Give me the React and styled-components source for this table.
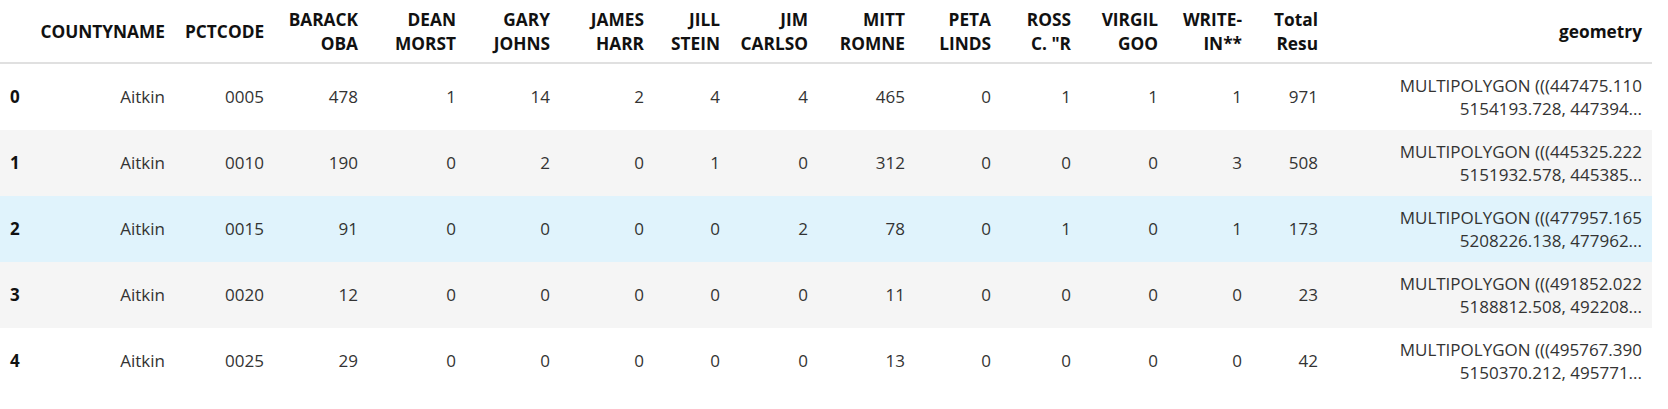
import React from "react";
import styled, { createGlobalStyle } from "styled-components";

const GlobalStyle = createGlobalStyle`
  body {
    margin: 0;
    background: #ffffff;
    font-family: "Open Sans", "Noto Sans", sans-serif;
  }
`;

const columns = [
  { key: "idx", lines: [""], width: 29 },
  { key: "county", lines: ["COUNTYNAME"], width: 146 },
  { key: "pct", lines: ["PCTCODE"], width: 99 },
  { key: "obama", lines: ["BARACK", "OBA"], width: 94 },
  { key: "morst", lines: ["DEAN", "MORST"], width: 98 },
  { key: "johns", lines: ["GARY", "JOHNS"], width: 94 },
  { key: "harr", lines: ["JAMES", "HARR"], width: 94 },
  { key: "stein", lines: ["JILL", "STEIN"], width: 76 },
  { key: "carlso", lines: ["JIM", "CARLSO"], width: 88 },
  { key: "romne", lines: ["MITT", "ROMNE"], width: 97 },
  { key: "linds", lines: ["PETA", "LINDS"], width: 86 },
  { key: "ross", lines: ["ROSS", 'C. "R'], width: 80 },
  { key: "goo", lines: ["VIRGIL", "GOO"], width: 87 },
  { key: "write", lines: ["WRITE-", "IN**"], width: 84 },
  { key: "total", lines: ["Total", "Resu"], width: 76 },
  { key: "geometry", lines: ["geometry"], width: 324 },
];

const rows = [
  ["Aitkin", "0005", 478, 1, 14, 2, 4, 4, 465, 0, 1, 1, 1, 971, ["MULTIPOLYGON (((447475.110", "5154193.728, 447394..."]],
  ["Aitkin", "0010", 190, 0, 2, 0, 1, 0, 312, 0, 0, 0, 3, 508, ["MULTIPOLYGON (((445325.222", "5151932.578, 445385..."]],
  ["Aitkin", "0015", 91, 0, 0, 0, 0, 2, 78, 0, 1, 0, 1, 173, ["MULTIPOLYGON (((477957.165", "5208226.138, 477962..."]],
  ["Aitkin", "0020", 12, 0, 0, 0, 0, 0, 11, 0, 0, 0, 0, 23, ["MULTIPOLYGON (((491852.022", "5188812.508, 492208..."]],
  ["Aitkin", "0025", 29, 0, 0, 0, 0, 0, 13, 0, 0, 0, 0, 42, ["MULTIPOLYGON (((495767.390", "5150370.212, 495771..."]],
];

const Frame = styled.div`
  width: 1668px;
  overflow: hidden;
`;

const Table = styled.table`
  width: 1652px;
  table-layout: fixed;
  border-collapse: collapse;
  border-spacing: 0;
  font-size: 17px;
  line-height: 23.5px;
  color: #333333;
`;

const Head = styled.thead`
  border-bottom: 2px solid #e0e0e0;
`;

const HeadCell = styled.th`
  padding: 8px 10px 7px;
  height: 47px;
  text-align: right;
  vertical-align: middle;
  font-size: 17.3px;
  font-weight: 700;
  color: #111111;
  white-space: nowrap;
`;

const Row = styled.tr`
  background: ${(p) => (p.$hover ? "#e0f3fc" : p.$striped ? "#f5f5f5" : "#ffffff")};
`;

const IndexCell = styled.th`
  padding: 9.5px 10px;
  height: 47px;
  text-align: left;
  vertical-align: middle;
  font-weight: 700;
  color: #111111;
`;

const Cell = styled.td`
  padding: 9.5px 10px;
  height: 47px;
  text-align: right;
  vertical-align: middle;
  white-space: nowrap;
`;

const Line = styled.span`
  display: block;
`;

export default function App() {
  return (
    <Frame>
      <GlobalStyle />
      <Table>
        <colgroup>
          {columns.map((c) => (
            <col key={c.key} style={{ width: c.width }} />
          ))}
        </colgroup>
        <Head>
          <tr>
            {columns.map((c) => (
              <HeadCell key={c.key}>
                {c.lines.map((l, i) => (
                  <Line key={i}>{l}</Line>
                ))}
              </HeadCell>
            ))}
          </tr>
        </Head>
        <tbody>
          {rows.map((r, ri) => (
            <Row key={ri} $striped={ri % 2 === 1} $hover={ri === 2}>
              <IndexCell>{ri}</IndexCell>
              {r.map((v, ci) =>
                Array.isArray(v) ? (
                  <Cell key={ci}>
                    {v.map((l, i) => (
                      <Line key={i}>{l}</Line>
                    ))}
                  </Cell>
                ) : (
                  <Cell key={ci}>{v}</Cell>
                )
              )}
            </Row>
          ))}
        </tbody>
      </Table>
    </Frame>
  );
}
